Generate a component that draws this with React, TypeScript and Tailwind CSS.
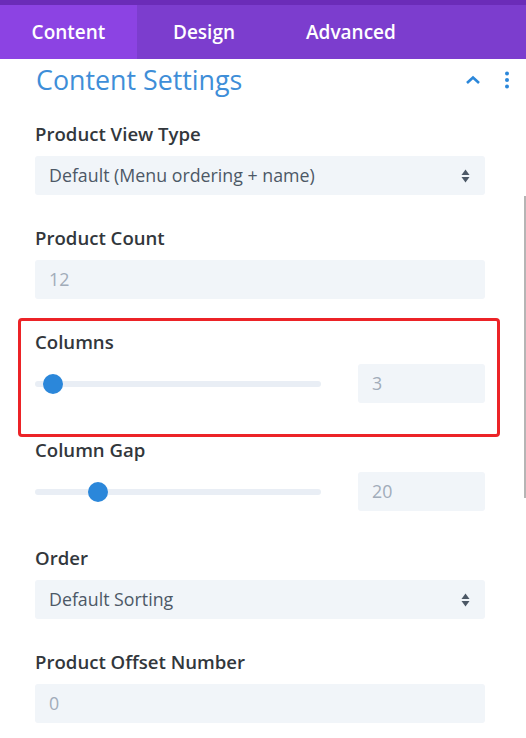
import React from 'react';

const font = { fontFamily: '"Open Sans", "Liberation Sans", sans-serif' };

function Label({ children }: { children: React.ReactNode }) {
  return <div className="h-[22px] text-[18.6px] leading-[22px] font-semibold text-[#32373c]">{children}</div>;
}

function SelectBox({ value }: { value: string }) {
  return (
    <div className="mt-[11px] flex h-[39px] items-center justify-between rounded-[3px] bg-[#f1f5f9] pl-[14px] pr-[14px]">
      <span className="text-[17.8px] font-medium text-[#4c5866]">{value}</span>
      <svg width="9" height="14" viewBox="0 0 9 14" className="mr-[1px]">
        <path d="M4.5 0.5 L8.5 6 H0.5 Z" fill="#4c5866" />
        <path d="M4.5 13.5 L8.5 8 H0.5 Z" fill="#4c5866" />
      </svg>
    </div>
  );
}

function InputBox({ value }: { value: string }) {
  return (
    <div className="mt-[11px] flex h-[39px] items-center rounded-[3px] bg-[#f1f5f9] pl-[14px]">
      <span className="text-[17.8px] text-[#a1acba]">{value}</span>
    </div>
  );
}

function Slider({ value, pos }: { value: string; pos: number }) {
  return (
    <div className="mt-[11px] flex h-[39px] items-center">
      <div className="relative h-[6px] w-[286px] rounded-full bg-[#e9eef5]">
        <div
          className="absolute top-1/2 h-[20px] w-[20px] -translate-y-1/2 rounded-full bg-[#2b87da]"
          style={{ left: pos }}
        />
      </div>
      <div className="ml-auto flex h-[39px] w-[127px] items-center rounded-[3px] bg-[#f1f5f9] pl-[14px]">
        <span className="text-[17.8px] text-[#a1acba]">{value}</span>
      </div>
    </div>
  );
}

export default function App() {
  return (
    <div className="relative h-[738px] w-[526px] overflow-hidden bg-white" style={font}>
      <div className="h-[5px] bg-[#6b2cb8]" />
      <div className="flex h-[54px] bg-[#7c3dce] text-[19px] font-semibold text-white">
        <div className="flex w-[137px] items-center justify-center bg-[#8c43e3]">Content</div>
        <div className="flex items-center pl-[36px]">Design</div>
        <div className="flex items-center pl-[71px]">Advanced</div>
      </div>

      <div className="flex h-[42px] items-center pl-[36px] pr-[16px]">
        <span className="text-[26.8px] font-normal text-[#3e8ed8]">Content Settings</span>
        <svg width="16" height="10" viewBox="0 0 16 10" className="ml-auto mr-[23px]">
          <path d="M2 8 L8 2.5 L14 8" stroke="#2b87da" strokeWidth="2.6" fill="none" />
        </svg>
        <svg width="6" height="18" viewBox="0 0 6 18">
          <circle cx="3" cy="2.5" r="2" fill="#2b87da" />
          <circle cx="3" cy="9" r="2" fill="#2b87da" />
          <circle cx="3" cy="15.5" r="2" fill="#2b87da" />
        </svg>
      </div>

      <div className="pl-[35px] pr-[41px] pt-[22px]">
        <Label>Product View Type</Label>
        <SelectBox value="Default (Menu ordering + name)" />

        <div className="mt-[32px]">
          <Label>Product Count</Label>
          <InputBox value="12" />
        </div>

        <div className="mt-[32px]">
          <Label>Columns</Label>
          <Slider value="3" pos={8} />
        </div>

        <div className="mt-[36px]">
          <Label>Column Gap</Label>
          <Slider value="20" pos={53} />
        </div>

        <div className="mt-[36px]">
          <Label>Order</Label>
          <SelectBox value="Default Sorting" />
        </div>

        <div className="mt-[32px]">
          <Label>Product Offset Number</Label>
          <InputBox value="0" />
        </div>
      </div>

      {/* highlight frame */}
      <div className="absolute left-[18px] top-[318px] h-[119px] w-[482px] rounded-[4px] border-[3px] border-[#ec2327]" />
      {/* scrollbar */}
      <div className="absolute right-[0px] top-[196px] h-[302px] w-[2px] bg-[#b5b5b5]" />
    </div>
  );
}
